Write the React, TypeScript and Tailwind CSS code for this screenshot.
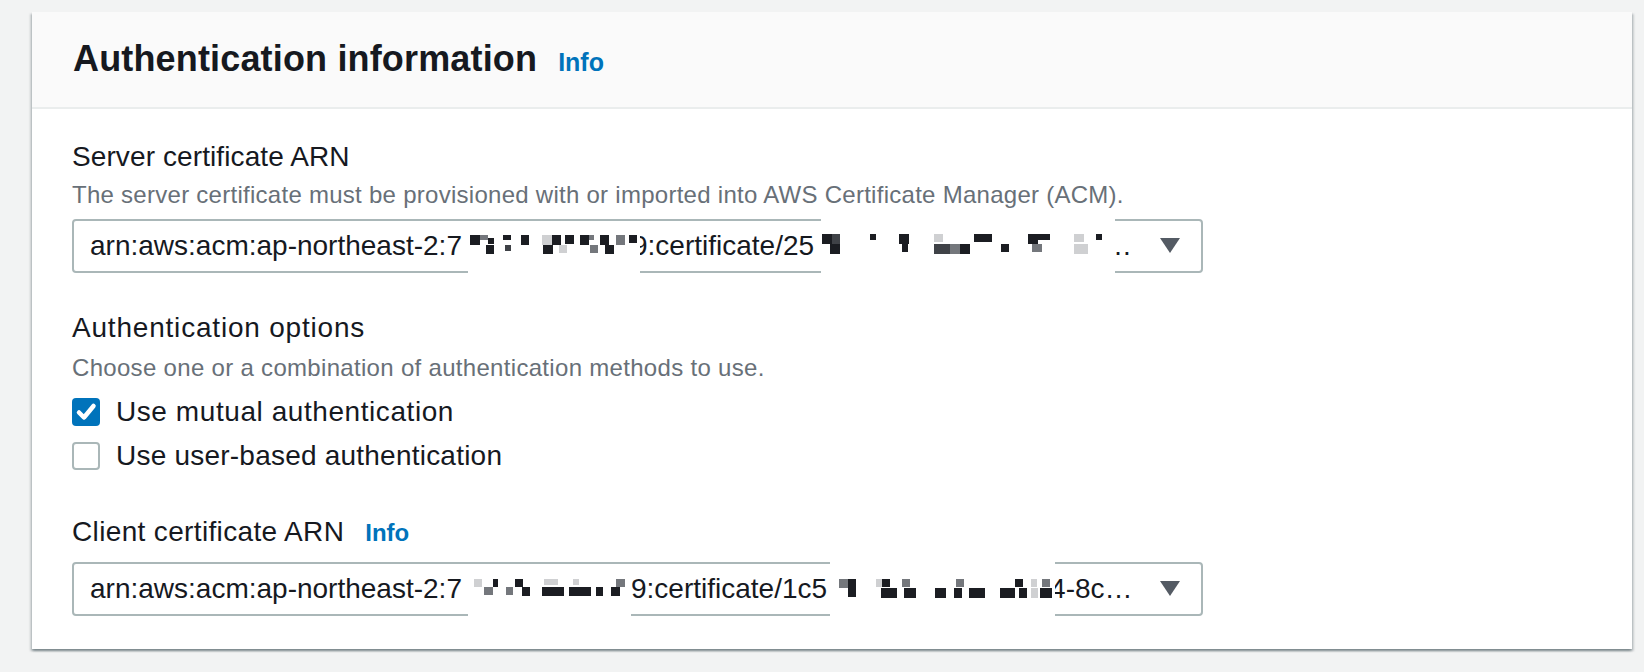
import React from "react";

type Cell = [number, number, number, number, string];

const d = "#1b1d22";
const m = "#3f4247";
const g = "#74777c";
const l = "#cfd0d2";

const cellsA: Cell[] = [
  [468, 233, 10, 10, d], [478, 233, 8, 5, g], [486, 236, 6, 6, d], [501, 233, 8, 5, d],
  [519, 233, 8, 10, d], [540, 233, 10, 10, l], [550, 233, 9, 10, d], [563, 233, 9, 9, d],
  [578, 233, 9, 10, d], [587, 233, 5, 5, g], [598, 233, 9, 10, d], [614, 233, 9, 10, g],
  [627, 233, 8, 8, d],
  [484, 243, 8, 9, d], [503, 243, 6, 6, m], [541, 243, 10, 9, d], [557, 243, 8, 8, l],
  [588, 243, 8, 8, g], [603, 243, 9, 9, d],
];

const cellsB: Cell[] = [
  [820, 232, 10, 10, d], [830, 232, 8, 10, m], [868, 232, 6, 6, d], [897, 232, 10, 10, d],
  [932, 232, 9, 8, l], [972, 232, 18, 8, d], [1026, 232, 10, 10, d], [1036, 232, 12, 6, d],
  [1072, 232, 10, 8, l], [1094, 232, 6, 6, d],
  [828, 242, 10, 10, d], [900, 242, 6, 8, d], [932, 242, 16, 10, m], [948, 242, 10, 10, g],
  [958, 242, 10, 10, d], [999, 242, 8, 8, d], [1030, 242, 10, 8, g], [1072, 242, 14, 10, l],
];

const cellsC: Cell[] = [
  [472, 578, 8, 8, l], [491, 578, 5, 8, d], [513, 578, 8, 8, d], [542, 578, 14, 6, l],
  [571, 578, 6, 6, l], [614, 578, 9, 8, g],
  [482, 586, 9, 8, g], [504, 586, 7, 8, g], [520, 586, 8, 9, d], [540, 586, 22, 9, d],
  [567, 586, 22, 9, d], [594, 586, 7, 9, d], [609, 586, 9, 9, d],
];

const cellsD: Cell[] = [
  [837, 578, 9, 9, g], [846, 578, 8, 18, d], [874, 578, 7, 8, l], [880, 578, 8, 8, d],
  [900, 578, 8, 8, g], [954, 578, 8, 8, g], [1013, 578, 8, 8, d], [1029, 578, 6, 8, l],
  [1040, 578, 8, 8, g],
  [879, 587, 16, 10, d], [902, 587, 12, 10, d], [933, 587, 11, 10, d], [952, 587, 8, 10, d],
  [967, 587, 16, 10, d], [998, 587, 15, 10, d], [1017, 587, 8, 10, d], [1029, 587, 7, 10, l],
  [1038, 587, 12, 10, d],
];

function Redaction({
  x, y, w, h, inputX, inputY, cells,
}: {
  x: number; y: number; w: number; h: number; inputX: number; inputY: number; cells: Cell[];
}) {
  return (
    <div
      className="absolute z-10 bg-white"
      style={{ left: x - inputX, top: y - inputY, width: w, height: h }}
    >
      {cells.map(([cx, cy, cw, ch, c], i) => (
        <div
          key={i}
          className="absolute"
          style={{ left: cx - x, top: cy - y, width: cw, height: ch, background: c }}
        />
      ))}
    </div>
  );
}

function Caret() {
  return (
    <svg width="20" height="15" viewBox="0 0 20 15" className="shrink-0">
      <path d="M0 0 H20 L10 15 Z" fill="#545b64" />
    </svg>
  );
}

function SelectBox({
  children,
  overlays,
}: {
  children: React.ReactNode;
  overlays: React.ReactNode;
}) {
  return (
    <div className="relative w-[1131px] h-[54px] border-2 border-[#aab7b8] rounded-[4px] bg-white flex items-center pl-[16px] pr-[21px]">
      <div className="flex items-center text-[28px] leading-none text-[#16191f] whitespace-nowrap">
        {children}
      </div>
      <div className="flex-1" />
      <Caret />
      {overlays}
    </div>
  );
}

function Checkbox({ checked }: { checked: boolean }) {
  if (checked) {
    return (
      <div className="w-[28px] h-[28px] rounded-[4px] bg-[#0073bb] flex items-center justify-center shrink-0">
        <svg width="28" height="28" viewBox="0 0 28 28">
          <path d="M7 14.5 L12 19.5 L21.5 8" fill="none" stroke="white" strokeWidth="4.5" strokeLinecap="round" strokeLinejoin="round" />
        </svg>
      </div>
    );
  }
  return <div className="w-[28px] h-[28px] rounded-[4px] border-2 border-[#aab7b8] bg-white shrink-0" />;
}

export default function App() {
  const font = { fontFamily: '"Liberation Sans", Arial, Helvetica, sans-serif' };
  return (
    <div className="min-h-screen bg-[#f2f3f3] pt-[12px] pl-[32px]" style={font}>
      <div className="w-[1600px] bg-white shadow-[0_2px_2px_0_rgba(0,28,36,0.3),2px_2px_2px_0_rgba(0,28,36,0.15),-2px_2px_2px_0_rgba(0,28,36,0.15)]">
        <div className="bg-[#fafafa] border-b-2 border-[#eaeded] px-[41px] pt-[25px] pb-[25px] flex items-baseline">
          <h2 className="text-[36px] leading-[44px] font-bold tracking-[0.16px] text-[#16191f]">Authentication information</h2>
          <span className="ml-[21px] text-[25px] font-bold text-[#0073bb]">Info</span>
        </div>
        <div className="px-[40px] pt-[28px] pb-[33px]">
          <div className="text-[28px] leading-[40px] tracking-[0.1px] text-[#16191f]">Server certificate ARN</div>
          <div className="text-[24px] leading-[36px] tracking-[0.27px] text-[#687078]">
            The server certificate must be provisioned with or imported into AWS Certificate Manager (ACM).
          </div>
          <div className="mt-[6px]">
            <SelectBox
              overlays={
                <>
                  <Redaction x={466} y={224} w={172} h={57} inputX={72} inputY={219} cells={cellsA} />
                  <Redaction x={819} y={212} w={294} h={69} inputX={72} inputY={219} cells={cellsB} />
                </>
              }
            >
              <span>arn:aws:acm:ap-northeast-2:7</span>
              <span className="inline-block w-[170px]" />
              <span>9:certificate/25</span>
              <span className="inline-block w-[290px]" />
              <span>…</span>
            </SelectBox>
          </div>

          <div className="mt-[35px] text-[28px] leading-[40px] tracking-[0.8px] text-[#16191f]">Authentication options</div>
          <div className="mt-[2px] text-[24px] leading-[36px] tracking-[0.31px] text-[#687078]">
            Choose one or a combination of authentication methods to use.
          </div>
          <div className="mt-[6px] flex flex-col gap-[4px]">
            <label className="flex items-center gap-[16px] h-[40px]">
              <Checkbox checked />
              <span className="text-[28px] tracking-[0.57px] text-[#16191f]">Use mutual authentication</span>
            </label>
            <label className="flex items-center gap-[16px] h-[40px]">
              <Checkbox checked={false} />
              <span className="text-[28px] tracking-[0.22px] text-[#16191f]">Use user-based authentication</span>
            </label>
          </div>

          <div className="mt-[36px] flex items-baseline">
            <span className="text-[28px] leading-[40px] tracking-[0.35px] text-[#16191f]">Client certificate ARN</span>
            <span className="ml-[21px] text-[24px] font-bold text-[#0073bb]">Info</span>
          </div>
          <div className="mt-[10px]">
            <SelectBox
              overlays={
                <>
                  <Redaction x={466} y={568} w={163} h={62} inputX={72} inputY={563} cells={cellsC} />
                  <Redaction x={828} y={550} w={225} h={75} inputX={72} inputY={563} cells={cellsD} />
                </>
              }
            >
              <span>arn:aws:acm:ap-northeast-2:7</span>
              <span className="inline-block w-[169px]" />
              <span>9:certificate/1c5</span>
              <span className="inline-block w-[223px]" />
              <span>4-8c…</span>
            </SelectBox>
          </div>
        </div>
      </div>
    </div>
  );
}
